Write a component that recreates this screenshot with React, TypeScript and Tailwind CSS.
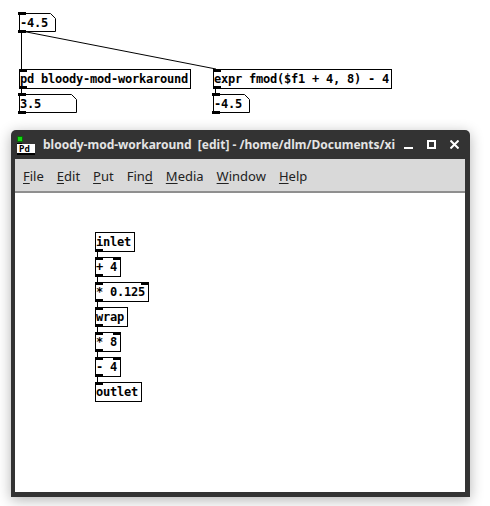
type Box = { label: string; x?: number; y?: number; w: number; inlets?: number[]; outlets?: number[]; cord?: boolean };

const mono = "font-['DejaVu_Sans_Mono',monospace] font-bold text-[12px] leading-[16px] tracking-[-0.22px]";

// nodes of the parent patch
const patchObjects: Box[] = [
  { label: 'pd bloody-mod-workaround', x: 19, y: 69, w: 172 },
  { label: 'expr fmod($f1 + 4, 8) - 4', x: 213, y: 69, w: 179 },
];

const numberBoxes: Box[] = [
  { label: '-4.5', x: 19, y: 13, w: 37 },
  { label: '3.5', x: 19, y: 94, w: 58 },
  { label: '-4.5', x: 213, y: 94, w: 37 },
];

// the subpatch is one straight chain of objects
const subObjects: Box[] = [
  { label: 'inlet', w: 40, inlets: [], outlets: [0], cord: true },
  { label: '+ 4', w: 26, inlets: [0, 1], outlets: [0], cord: true },
  { label: '* 0.125', w: 54, inlets: [0, 1], outlets: [0], cord: true },
  { label: 'wrap', w: 33, inlets: [0], outlets: [0], cord: true },
  { label: '* 8', w: 26, inlets: [0, 1], outlets: [0], cord: true },
  { label: '- 4', w: 26, inlets: [0, 1], outlets: [0], cord: true },
  { label: 'outlet', w: 47, inlets: [0], outlets: [] },
];

function Ports({ box }: { box: Box }) {
  const inlets = box.inlets ?? [0];
  const outlets = box.outlets ?? [0];
  return (
    <>
      {inlets.map((side) => (
        <div
          key={`i${side}`}
          className={`absolute top-[-1px] w-[8px] h-[3px] bg-black ${side === 0 ? 'left-[-1px]' : 'right-[-1px]'}`}
        />
      ))}
      {outlets.map((side) => (
        <div key={`o${side}`} className="absolute bottom-[-1px] left-[-1px] w-[8px] h-[3px] bg-black" />
      ))}
    </>
  );
}

function ObjectBox({ box }: { box: Box }) {
  return (
    <div
      className={`relative h-[20px] pt-[1px] border border-black bg-white text-black whitespace-nowrap ${mono}`}
      style={{ width: box.w }}
    >
      {box.label}
      <Ports box={box} />
      {box.cord && <div className="absolute left-[1px] top-[18px] w-[1px] h-[7px] bg-black" />}
    </div>
  );
}

function NumberBox({ box }: { box: Box }) {
  return (
    <div
      className={`absolute h-[19px] pt-[2px] pl-[1px] text-black whitespace-nowrap ${mono}`}
      style={{ left: box.x, top: box.y, width: box.w }}
    >
      <svg className="absolute left-0 top-0" width={box.w} height={19}>
        <path
          d={`M0.5 0.5H${box.w - 5.5}L${box.w - 0.5} 5.5V18.5H0.5Z`}
          fill="white"
          stroke="black"
        />
      </svg>
      <span className="relative">{box.label}</span>
      <Ports box={box} />
    </div>
  );
}

function PdIcon() {
  return (
    <div className="relative w-[18px] h-[18px] shrink-0 ml-[2px]">
      <div className="absolute left-0 top-0 w-[6px] h-[6px] bg-[#12d812] border border-[#0a6b0a]" />
      <div className="absolute left-0 top-[8px] w-[18px] h-[11px] bg-white border-b-2 border-black pl-[2px] text-black font-['DejaVu_Sans_Mono',monospace] font-bold text-[9px] leading-[10px]">
        Pd
      </div>
      <div className="absolute left-0 top-[7px] w-[5px] h-[1px] bg-black" />
    </div>
  );
}

function MenuItem({ label, under }: { label: string; under: number }) {
  return (
    <span className="whitespace-nowrap">
      {label.slice(0, under)}
      <span className="underline underline-offset-2 decoration-1">{label[under]}</span>
      {label.slice(under + 1)}
    </span>
  );
}

const menus: [string, number][] = [
  ['File', 0],
  ['Edit', 0],
  ['Put', 0],
  ['Find', 3],
  ['Media', 0],
  ['Window', 0],
  ['Help', 0],
];

export default function App() {
  return (
    <div className="relative w-[490px] h-[506px] bg-white overflow-hidden">
      {/* patch cords */}
      <svg className="absolute left-0 top-0" width={490} height={130}>
        <path d="M21.5 31V69" stroke="black" fill="none" />
        <path d="M21.5 31L216 69" stroke="black" fill="none" />
        <path d="M21.5 88V94" stroke="black" fill="none" />
        <path d="M215.5 88V94" stroke="black" fill="none" />
      </svg>

      {patchObjects.map((b) => (
        <div key={b.label} className="absolute" style={{ left: b.x, top: b.y }}>
          <ObjectBox box={b} />
        </div>
      ))}
      {numberBoxes.map((b) => (
        <NumberBox key={`${b.label}${b.x}${b.y}`} box={b} />
      ))}

      {/* subpatch window */}
      <div className="absolute left-[11px] top-[130px] w-[459px] h-[367px] flex flex-col bg-[#333333] rounded-t-[5px] shadow-[0_3px_14px_rgba(0,0,0,0.3)] pl-[4px] pr-[5px] pb-[5px]">
        <div className="h-[29px] shrink-0 flex items-center text-[#e4e4e4]">
          <PdIcon />
          <span className="ml-[8px] flex-1 min-w-0 whitespace-nowrap font-['Noto_Sans',sans-serif] font-bold text-[12px] leading-[18px]">
            bloody-mod-workaround&nbsp; [edit] - /home/dlm/Documents/xi
          </span>
          <div className="flex items-center gap-[14px] pr-[6px]">
            <svg width={9} height={9} viewBox="0 0 9 9" className="text-white">
              <path d="M0 8H9" stroke="currentColor" strokeWidth={2} />
            </svg>
            <svg width={9} height={9} viewBox="0 0 9 9" className="text-white">
              <path d="M1 1H8V8H1Z" stroke="currentColor" strokeWidth={2} fill="none" />
            </svg>
            <svg width={9} height={9} viewBox="0 0 9 9" className="text-white">
              <path d="M0.5 0.5L8.5 8.5M8.5 0.5L0.5 8.5" stroke="currentColor" strokeWidth={2} fill="none" />
            </svg>
          </div>
        </div>
        <div className="h-[34px] shrink-0 bg-[#d9d9d9] border-b-2 border-[#8f8f8f] flex items-center gap-[13px] pl-[8px] pt-[1px] text-[#222222] font-['Noto_Sans',sans-serif] text-[13px] leading-[18px]">
          {menus.map(([label, under]) => (
            <MenuItem key={label} label={label} under={under} />
          ))}
        </div>
        <div className="flex-1 bg-white flex flex-col items-start gap-[5px] pl-[80px] pt-[39px]">
          {subObjects.map((b) => (
            <ObjectBox key={b.label} box={b} />
          ))}
        </div>
      </div>
    </div>
  );
}
